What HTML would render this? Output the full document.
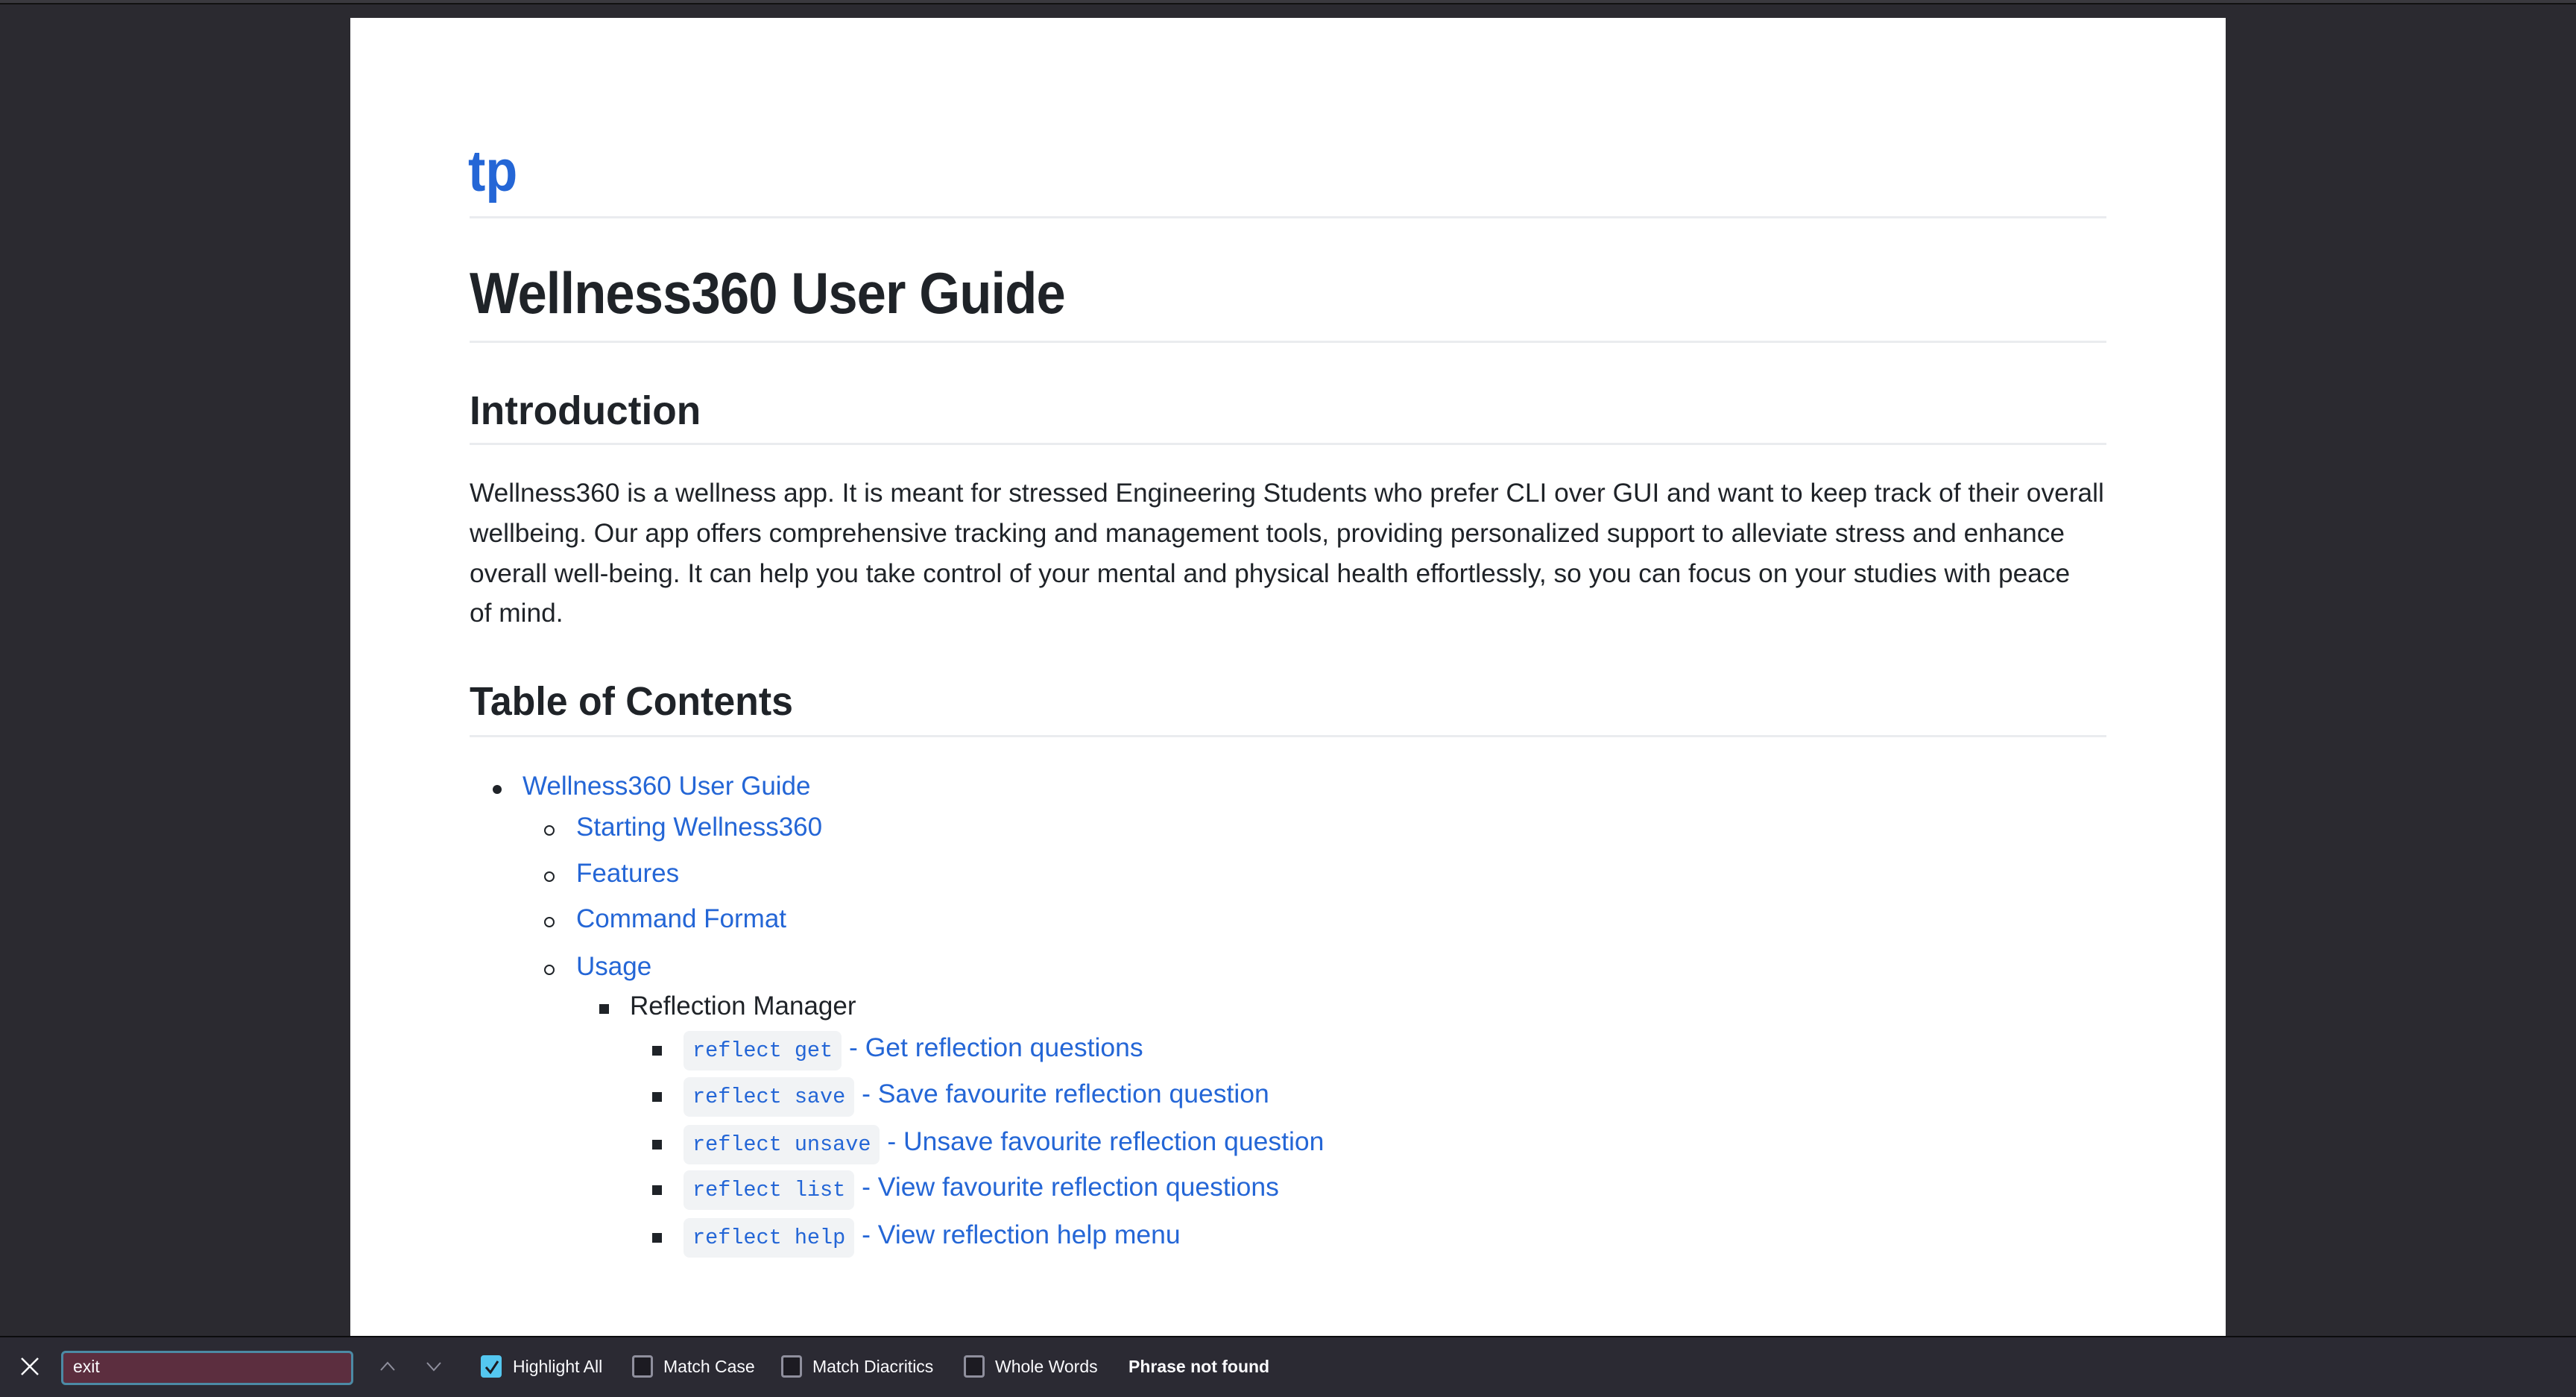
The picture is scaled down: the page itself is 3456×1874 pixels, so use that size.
<!DOCTYPE html>
<html><head><meta charset="utf-8"><style>
*{margin:0;padding:0;box-sizing:border-box}
html,body{width:3456px;height:1874px;overflow:hidden;background:#2b2a30;font-family:"Liberation Sans",sans-serif}
#top{position:absolute;left:0;top:0;width:3456px;height:4px;background:#3a393e}
#top2{position:absolute;left:0;top:4px;width:3456px;height:2px;background:#111}
#page{position:absolute;left:470px;top:24px;width:2516px;height:1768px;background:#fff;overflow:hidden}
.a{position:absolute;white-space:nowrap;color:#1f2328}
.hr{position:absolute;left:160px;width:2196px;height:3px;background:#eaecef}
.l{color:#2466d6}
.p{font-size:35.3px;left:160px}
code{font-family:"Liberation Mono",monospace;font-size:28.5px;background:#f1f3f5;border-radius:8px;padding:10px 12px;color:#2466d6}
.dot{position:absolute;width:12px;height:12px;border-radius:50%;background:#1f2328}
.circ{position:absolute;width:14px;height:14px;border-radius:50%;border:2.5px solid #1f2328}
.sq{position:absolute;width:13px;height:13px;background:#1f2328}
#bar{position:absolute;left:0;top:1792px;width:3456px;height:82px;background:#2b2a33;border-top:2px solid #0c0c0e}
.t{position:absolute;color:#fbfbfe;font-size:23px;top:26px;white-space:nowrap}
.cb{position:absolute;top:24px;width:28px;height:30px;border:3px solid #8f8f9d;border-radius:4px;background:#1c1b22}
</style></head><body>
<div id="top"></div><div id="top2"></div>
<div id="page">
<div class="a l" style="left:158px;top:160px;font-size:78px;font-weight:bold;transform:scaleX(0.9);transform-origin:left">tp</div>
<div class="hr" style="top:266px"></div>
<div class="a" style="left:160px;top:324px;font-size:78px;font-weight:bold;letter-spacing:-1px;transform:scaleX(0.905);transform-origin:left">Wellness360 User Guide</div>
<div class="hr" style="top:433px"></div>
<div class="a" style="left:160px;top:496px;font-size:54px;font-weight:bold;transform:scaleX(0.985);transform-origin:left">Introduction</div>
<div class="hr" style="top:570px"></div>
<div class="a p" style="top:618px">Wellness360 is a wellness app. It is meant for stressed Engineering Students who prefer CLI over GUI and want to keep track of their overall</div>
<div class="a p" style="top:672px">wellbeing. Our app offers comprehensive tracking and management tools, providing personalized support to alleviate stress and enhance</div>
<div class="a p" style="top:726px">overall well-being. It can help you take control of your mental and physical health effortlessly, so you can focus on your studies with peace</div>
<div class="a p" style="top:779px">of mind.</div>
<div class="a" style="left:160px;top:886px;font-size:54px;font-weight:bold;transform:scaleX(0.96);transform-origin:left">Table of Contents</div>
<div class="hr" style="top:962px"></div>

<div class="dot" style="left:191px;top:1029px"></div>
<div class="a l" style="left:231px;top:1011px;font-size:35px">Wellness360 User Guide</div>
<div class="circ" style="left:260px;top:1083px"></div>
<div class="a l" style="left:303px;top:1066px;font-size:35px">Starting Wellness360</div>
<div class="circ" style="left:260px;top:1145px"></div>
<div class="a l" style="left:303px;top:1128px;font-size:35px">Features</div>
<div class="circ" style="left:260px;top:1206px"></div>
<div class="a l" style="left:303px;top:1189px;font-size:35px">Command Format</div>
<div class="circ" style="left:260px;top:1270px"></div>
<div class="a l" style="left:303px;top:1253px;font-size:35px">Usage</div>
<div class="sq" style="left:334px;top:1323px"></div>
<div class="a" style="left:375px;top:1306px;font-size:35px">Reflection Manager</div>

<div class="sq" style="left:405px;top:1379px"></div>
<div class="a l" style="left:447px;top:1361px;font-size:35.5px"><code>reflect get</code> - Get reflection questions</div>
<div class="sq" style="left:405px;top:1441px"></div>
<div class="a l" style="left:447px;top:1423px;font-size:35.5px"><code>reflect save</code> - Save favourite reflection question</div>
<div class="sq" style="left:405px;top:1505px"></div>
<div class="a l" style="left:447px;top:1487px;font-size:35.5px"><code>reflect unsave</code> - Unsave favourite reflection question</div>
<div class="sq" style="left:405px;top:1566px"></div>
<div class="a l" style="left:447px;top:1548px;font-size:35.5px"><code>reflect list</code> - View favourite reflection questions</div>
<div class="sq" style="left:405px;top:1630px"></div>
<div class="a l" style="left:447px;top:1612px;font-size:35.5px"><code>reflect help</code> - View reflection help menu</div>
</div>

<div id="bar">
<svg style="position:absolute;left:27px;top:26px" width="26" height="26" viewBox="0 0 26 26"><path d="M2 2L24 24M24 2L2 24" stroke="#fbfbfe" stroke-width="2.5"/></svg>
<div style="position:absolute;left:82px;top:18px;width:392px;height:46px;background:#5c2e3f;border:3px solid #4c8aa5;border-radius:6px"></div>
<div class="t" style="left:98px">exit</div>
<svg style="position:absolute;left:508px;top:30px" width="24" height="18" viewBox="0 0 24 18"><path d="M3 14L12 4L21 14" stroke="#8f8f9d" stroke-width="2" fill="none"/></svg>
<svg style="position:absolute;left:570px;top:30px" width="24" height="18" viewBox="0 0 24 18"><path d="M3 4L12 14L21 4" stroke="#8f8f9d" stroke-width="2" fill="none"/></svg>
<div class="cb" style="left:645px;background:#54c7f0;border-color:#54c7f0"></div>
<svg style="position:absolute;left:648px;top:28px" width="24" height="24" viewBox="0 0 24 24"><path d="M4 12L10 19L20 4" stroke="#1c1b22" stroke-width="3" fill="none"/></svg>
<div class="t" style="left:688px">Highlight All</div>
<div class="cb" style="left:848px"></div>
<div class="t" style="left:890px">Match Case</div>
<div class="cb" style="left:1048px"></div>
<div class="t" style="left:1090px">Match Diacritics</div>
<div class="cb" style="left:1293px"></div>
<div class="t" style="left:1335px">Whole Words</div>
<div class="t" style="left:1514px;font-weight:bold">Phrase not found</div>
</div>
</body></html>
